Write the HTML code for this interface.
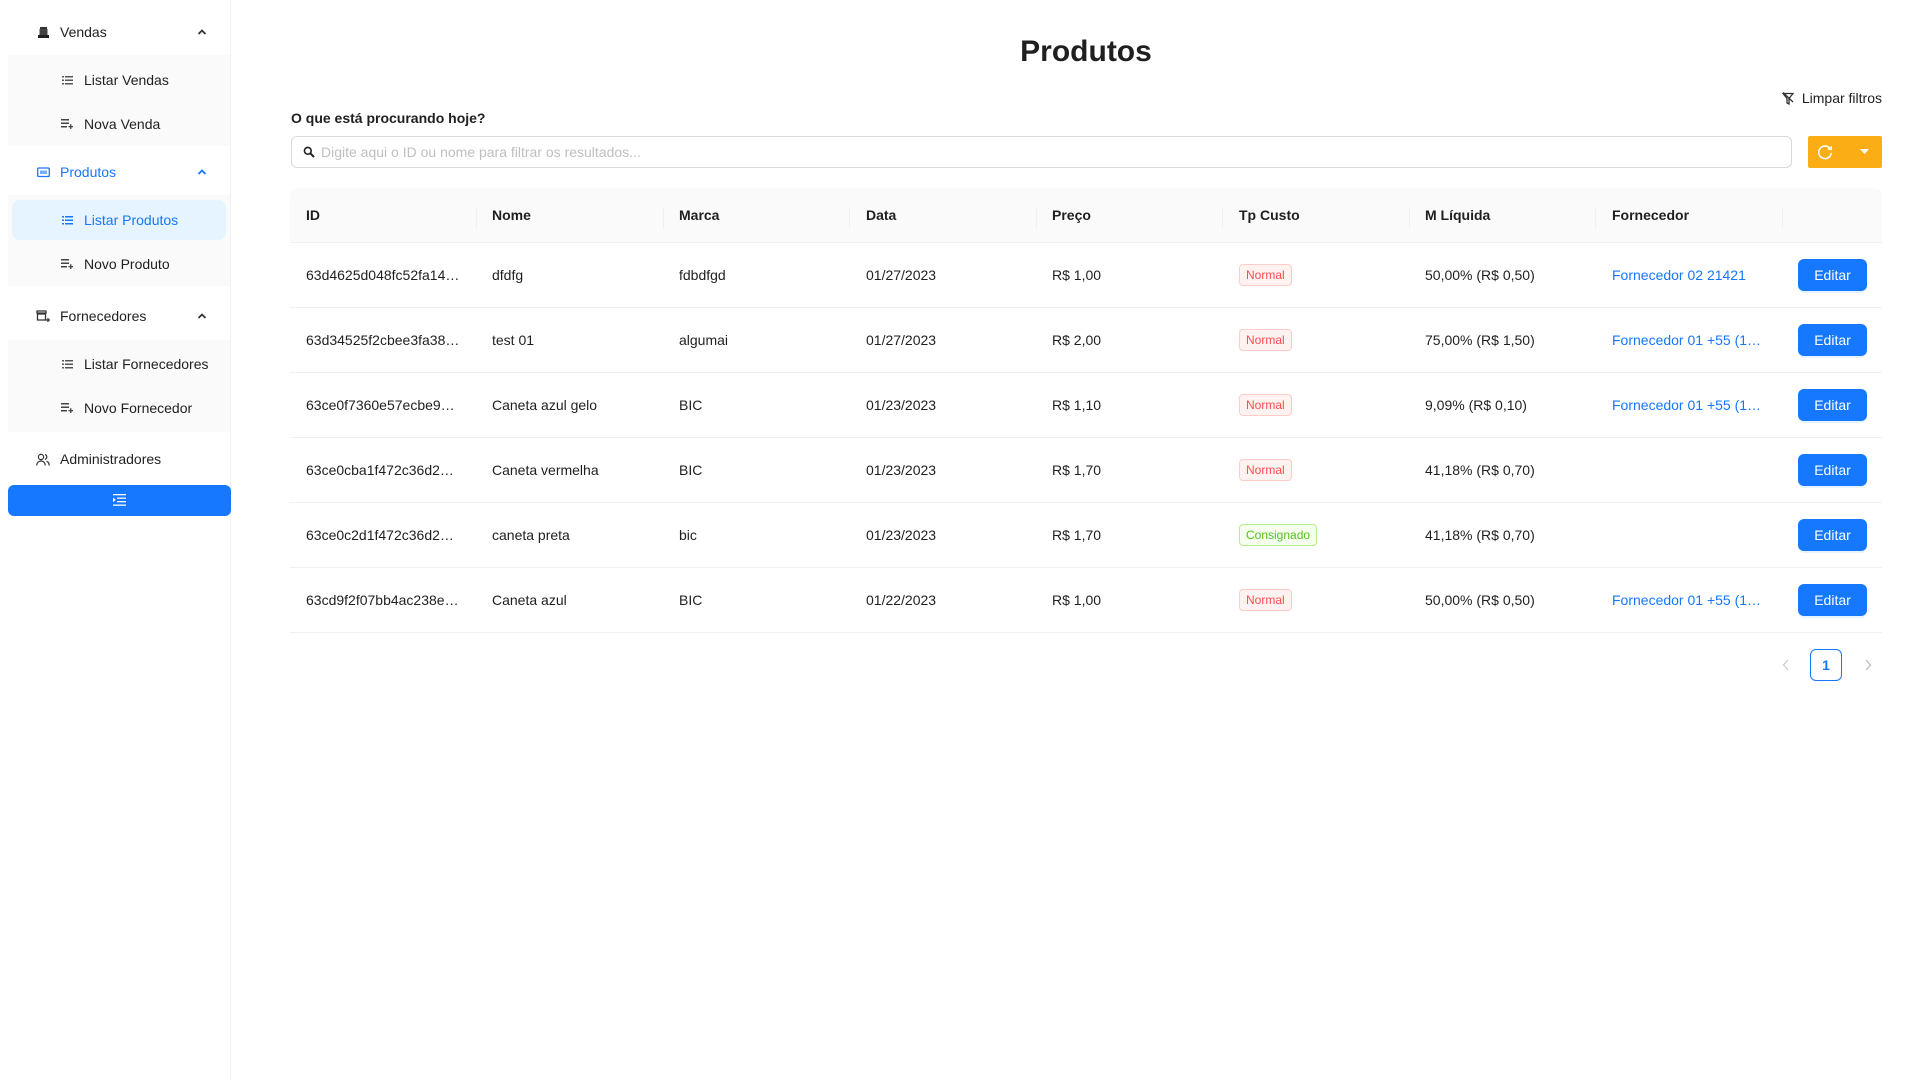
<!DOCTYPE html>
<html><head><meta charset="utf-8"><style>
*{box-sizing:border-box;margin:0;padding:0}
body{width:1920px;height:1080px;background:#fff;font-family:"Liberation Sans",Arial,sans-serif;font-size:14px;color:rgba(0,0,0,.88);position:relative;overflow:hidden}
.abs{position:absolute}
.side{position:absolute;left:0;top:0;width:231px;height:1080px;border-right:1px solid #f0f0f0}
.subbg{position:absolute;left:8px;width:222px;background:#fafafa}
.it{position:absolute;display:flex;align-items:center;height:20px;line-height:20px}
.ico{width:14px;height:14px;margin-right:10px;display:inline-flex;align-items:center;justify-content:center}
.chev{position:absolute;left:197px;width:10px;height:10px}
.hdr{position:absolute;left:290px;top:188px;width:1592px;height:55px;background:#fafafa;border-radius:8px 8px 0 0;border-bottom:1px solid #f0f0f0}
.hdr div{position:absolute;top:0;height:55px;line-height:55px;font-weight:bold}
.sep{position:absolute;top:19px;width:1px;height:22px;background:#f0f0f0}
.row{position:absolute;left:290px;width:1592px;height:65px;border-bottom:1px solid #f0f0f0}
.row div.c{position:absolute;top:0;line-height:64px;white-space:nowrap}
.tag{position:absolute;top:21px;height:22px;line-height:20px;font-size:12px;padding:0 6px;border-radius:4px;border:1px solid #ffccc7;background:#fff2f0;color:#ff4d4f}
.tag.g{border-color:#b7eb8f;background:#f6ffed;color:#52c41a}
.btn{position:absolute;left:1508px;top:16px;width:69px;height:32px;border-radius:6px;background:#1677ff;color:#fff;text-align:center;line-height:32px;box-shadow:0 2px 0 rgba(5,145,255,.1)}
a{color:#1677ff;text-decoration:none}
</style></head><body>
<div class="side">
  <div class="subbg" style="top:55px;height:91px"></div>
  <div class="subbg" style="top:195px;height:91px"></div>
  <div class="subbg" style="top:340px;height:92px"></div>
  <div class="abs" style="left:12px;top:200px;width:214px;height:40px;background:#e6f4ff;border-radius:8px"></div>

  <div class="it" style="left:36px;top:22px"><span class="ico"><svg width="13" height="13" viewBox="0 0 13 13"><rect x="3" y="1" width="7" height="2" fill="#333"/><rect x="2.5" y="3" width="8" height="6" fill="#444"/><rect x="1" y="9" width="11" height="3" fill="#222"/></svg></span>Vendas</div>
  <svg class="chev" style="top:27px" viewBox="0 0 10 10"><path d="M1.5 7 L5 3.5 L8.5 7" stroke="#333" stroke-width="1.8" fill="none"/></svg>
  <div class="it" style="left:60px;top:70px"><span class="ico"><svg width="11" height="9" viewBox="0 0 11 9"><g fill="#555"><rect x="0" y="0" width="2" height="1.5"/><rect x="3" y="0" width="8" height="1.5"/><rect x="0" y="3.5" width="2" height="1.5"/><rect x="3" y="3.5" width="8" height="1.5"/><rect x="0" y="7" width="2" height="1.5"/><rect x="3" y="7" width="8" height="1.5"/></g></svg></span>Listar Vendas</div>
  <div class="it" style="left:60px;top:114px"><span class="ico"><svg width="12" height="10" viewBox="0 0 12 10"><g fill="#444"><rect x="0" y="0" width="8" height="1.5"/><rect x="0" y="3.5" width="8" height="1.5"/><rect x="0" y="7" width="6" height="1.5"/><rect x="7.5" y="7" width="4.5" height="1.3"/><rect x="9.1" y="5.2" width="1.3" height="4.8"/></g></svg></span>Nova Venda</div>

  <div class="it" style="left:36px;top:162px;color:#1677ff"><span class="ico"><svg width="13" height="11" viewBox="0 0 13 11"><rect x="0.7" y="1" width="11.6" height="8.5" rx="1" fill="none" stroke="#1677ff" stroke-width="1.3"/><rect x="3" y="3.5" width="7" height="3.5" fill="#1677ff" opacity=".6"/></svg></span>Produtos</div>
  <svg class="chev" style="top:167px" viewBox="0 0 10 10"><path d="M1.5 7 L5 3.5 L8.5 7" stroke="#1677ff" stroke-width="1.8" fill="none"/></svg>
  <div class="it" style="left:60px;top:210px;color:#1677ff"><span class="ico"><svg width="11" height="9" viewBox="0 0 11 9"><g fill="#1677ff"><rect x="0" y="0" width="2" height="1.5"/><rect x="3" y="0" width="8" height="1.5"/><rect x="0" y="3.5" width="2" height="1.5"/><rect x="3" y="3.5" width="8" height="1.5"/><rect x="0" y="7" width="2" height="1.5"/><rect x="3" y="7" width="8" height="1.5"/></g></svg></span>Listar Produtos</div>
  <div class="it" style="left:60px;top:254px"><span class="ico"><svg width="12" height="10" viewBox="0 0 12 10"><g fill="#444"><rect x="0" y="0" width="8" height="1.5"/><rect x="0" y="3.5" width="8" height="1.5"/><rect x="0" y="7" width="6" height="1.5"/><rect x="7.5" y="7" width="4.5" height="1.3"/><rect x="9.1" y="5.2" width="1.3" height="4.8"/></g></svg></span>Novo Produto</div>

  <div class="it" style="left:36px;top:306px"><span class="ico"><svg width="14" height="13" viewBox="0 0 14 13"><path d="M1 1h9v2H1z M1.5 4h8v6h-8z" fill="none" stroke="#333" stroke-width="1.3"/><path d="M10 10h4 M12 8v4" stroke="#333" stroke-width="1.3"/></svg></span>Fornecedores</div>
  <svg class="chev" style="top:311px" viewBox="0 0 10 10"><path d="M1.5 7 L5 3.5 L8.5 7" stroke="#333" stroke-width="1.8" fill="none"/></svg>
  <div class="it" style="left:60px;top:354px"><span class="ico"><svg width="11" height="9" viewBox="0 0 11 9"><g fill="#555"><rect x="0" y="0" width="2" height="1.5"/><rect x="3" y="0" width="8" height="1.5"/><rect x="0" y="3.5" width="2" height="1.5"/><rect x="3" y="3.5" width="8" height="1.5"/><rect x="0" y="7" width="2" height="1.5"/><rect x="3" y="7" width="8" height="1.5"/></g></svg></span>Listar Fornecedores</div>
  <div class="it" style="left:60px;top:398px"><span class="ico"><svg width="12" height="10" viewBox="0 0 12 10"><g fill="#444"><rect x="0" y="0" width="8" height="1.5"/><rect x="0" y="3.5" width="8" height="1.5"/><rect x="0" y="7" width="6" height="1.5"/><rect x="7.5" y="7" width="4.5" height="1.3"/><rect x="9.1" y="5.2" width="1.3" height="4.8"/></g></svg></span>Novo Fornecedor</div>

  <div class="it" style="left:36px;top:449px"><span class="ico"><svg width="14" height="13" viewBox="0 0 14 13"><circle cx="5" cy="4" r="2.6" fill="none" stroke="#333" stroke-width="1.2"/><path d="M0.8 12.5c0-3 2-4.5 4.2-4.5s4.2 1.5 4.2 4.5" fill="none" stroke="#333" stroke-width="1.2"/><path d="M9 1.6a2.5 2.5 0 0 1 0 4.8 M10.5 8.2c1.7.6 2.7 2 2.7 4.3" fill="none" stroke="#333" stroke-width="1.2"/></svg></span>Administradores</div>

  <div class="abs" style="left:8px;top:485px;width:223px;height:31px;background:#1677ff;border-radius:6px"></div>
  <svg class="abs" style="left:113px;top:494px" width="13" height="12" viewBox="0 0 13 12"><g fill="#fff"><rect x="0" y="0" width="13" height="1.3"/><rect x="4" y="3.5" width="9" height="1.3"/><rect x="4" y="7" width="9" height="1.3"/><rect x="0" y="10.5" width="13" height="1.3"/><path d="M0 3.5 L2.8 5.9 L0 8.3z"/></g></svg>
</div>

<div class="abs" style="left:290px;width:1592px;top:33px;text-align:center;font-size:30px;font-weight:bold;line-height:38px">Produtos</div>

<div class="abs" style="right:38px;top:88px;height:20px;line-height:20px;display:flex;align-items:center"><svg width="12" height="13" viewBox="0 0 12 13" style="margin-right:8px"><path d="M1 1.5 L11 1.5 L7 6.5 L7 12 L5 11 L5 6.5z" fill="none" stroke="#333" stroke-width="1.3"/><path d="M1 0.5 L11 10" stroke="#333" stroke-width="1.3"/></svg>Limpar filtros</div>

<div class="abs" style="left:291px;top:108px;font-weight:bold;line-height:20px">O que está procurando hoje?</div>
<div class="abs" style="left:291px;top:136px;width:1501px;height:32px;border:1px solid #d9d9d9;border-radius:6px;display:flex;align-items:center;padding-left:11px;color:#bfbfbf">
<svg width="12" height="12" viewBox="0 0 12 12" style="margin-right:6px"><circle cx="4.8" cy="4.8" r="3.4" fill="none" stroke="#222" stroke-width="1.6"/><path d="M7.3 7.3 L11 11" stroke="#222" stroke-width="2"/></svg>Digite aqui o ID ou nome para filtrar os resultados...</div>
<div class="abs" style="left:1808px;top:136px;width:74px;height:32px;background:#faad14;border-radius:2px"></div>
<svg class="abs" style="left:1816px;top:143px" width="18" height="18" viewBox="0 0 18 18"><path d="M14.5 6.2 A6.3 6.3 0 1 0 15.3 9.8" fill="none" stroke="#fff" stroke-width="1.5"/><path d="M11.8 5.8 L15.2 6.6 L15.3 3.2" fill="none" stroke="#fff" stroke-width="1.5"/></svg>
<svg class="abs" style="left:1860px;top:149px" width="9" height="6" viewBox="0 0 9 6"><path d="M0 0 H9 L4.5 5z" fill="#fff"/></svg>

<div class="hdr">
<div style="left:16px">ID</div><div style="left:202px">Nome</div><div style="left:389px">Marca</div><div style="left:576px">Data</div><div style="left:762px">Preço</div><div style="left:949px">Tp Custo</div><div style="left:1135px">M Líquida</div><div style="left:1322px">Fornecedor</div>
<span class="sep" style="left:186px"></span><span class="sep" style="left:373px"></span><span class="sep" style="left:559px"></span><span class="sep" style="left:746px"></span><span class="sep" style="left:932px"></span><span class="sep" style="left:1119px"></span><span class="sep" style="left:1305px"></span><span class="sep" style="left:1492px"></span>
</div>

<div class="row" style="top:243px"><div class="c" style="left:16px">63d4625d048fc52fa14…</div><div class="c" style="left:202px">dfdfg</div><div class="c" style="left:389px">fdbdfgd</div><div class="c" style="left:576px">01/27/2023</div><div class="c" style="left:762px">R$ 1,00</div><span class="tag" style="left:949px">Normal</span><div class="c" style="left:1135px">50,00% (R$ 0,50)</div><div class="c" style="left:1322px"><a>Fornecedor 02 21421</a></div><div class="btn">Editar</div></div>
<div class="row" style="top:308px"><div class="c" style="left:16px">63d34525f2cbee3fa38…</div><div class="c" style="left:202px">test 01</div><div class="c" style="left:389px">algumai</div><div class="c" style="left:576px">01/27/2023</div><div class="c" style="left:762px">R$ 2,00</div><span class="tag" style="left:949px">Normal</span><div class="c" style="left:1135px">75,00% (R$ 1,50)</div><div class="c" style="left:1322px"><a>Fornecedor 01 +55 (1…</a></div><div class="btn">Editar</div></div>
<div class="row" style="top:373px"><div class="c" style="left:16px">63ce0f7360e57ecbe9…</div><div class="c" style="left:202px">Caneta azul gelo</div><div class="c" style="left:389px">BIC</div><div class="c" style="left:576px">01/23/2023</div><div class="c" style="left:762px">R$ 1,10</div><span class="tag" style="left:949px">Normal</span><div class="c" style="left:1135px">9,09% (R$ 0,10)</div><div class="c" style="left:1322px"><a>Fornecedor 01 +55 (1…</a></div><div class="btn">Editar</div></div>
<div class="row" style="top:438px"><div class="c" style="left:16px">63ce0cba1f472c36d2…</div><div class="c" style="left:202px">Caneta vermelha</div><div class="c" style="left:389px">BIC</div><div class="c" style="left:576px">01/23/2023</div><div class="c" style="left:762px">R$ 1,70</div><span class="tag" style="left:949px">Normal</span><div class="c" style="left:1135px">41,18% (R$ 0,70)</div><div class="btn">Editar</div></div>
<div class="row" style="top:503px"><div class="c" style="left:16px">63ce0c2d1f472c36d2…</div><div class="c" style="left:202px">caneta preta</div><div class="c" style="left:389px">bic</div><div class="c" style="left:576px">01/23/2023</div><div class="c" style="left:762px">R$ 1,70</div><span class="tag g" style="left:949px">Consignado</span><div class="c" style="left:1135px">41,18% (R$ 0,70)</div><div class="btn">Editar</div></div>
<div class="row" style="top:568px"><div class="c" style="left:16px">63cd9f2f07bb4ac238e…</div><div class="c" style="left:202px">Caneta azul</div><div class="c" style="left:389px">BIC</div><div class="c" style="left:576px">01/22/2023</div><div class="c" style="left:762px">R$ 1,00</div><span class="tag" style="left:949px">Normal</span><div class="c" style="left:1135px">50,00% (R$ 0,50)</div><div class="c" style="left:1322px"><a>Fornecedor 01 +55 (1…</a></div><div class="btn">Editar</div></div>

<svg class="abs" style="left:1782px;top:659px" width="8" height="12" viewBox="0 0 8 12"><path d="M6 1 L1.5 6 L6 11" fill="none" stroke="#ccc" stroke-width="1.3"/></svg>
<div class="abs" style="left:1810px;top:649px;width:32px;height:32px;border:1px solid #1677ff;border-radius:6px;color:#1677ff;font-weight:bold;text-align:center;line-height:30px">1</div>
<svg class="abs" style="left:1864px;top:659px" width="8" height="12" viewBox="0 0 8 12"><path d="M2 1 L6.5 6 L2 11" fill="none" stroke="#bbb" stroke-width="1.3"/></svg>
</body></html>
